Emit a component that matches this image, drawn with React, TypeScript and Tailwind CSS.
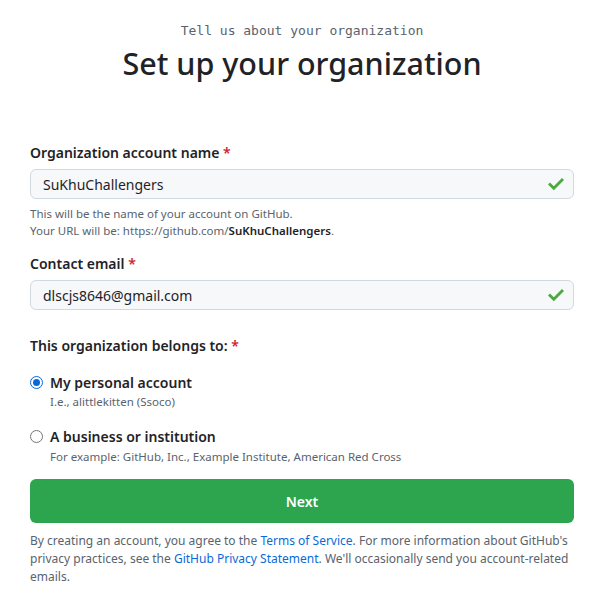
import React from "react";

function Check() {
  return (
    <svg width="18" height="18" viewBox="0 0 18 18" className="absolute right-[9px] top-1/2 -translate-y-1/2" fill="none">
      <path d="M3 9.5l3.8 3.8L15 5" stroke="#4ca93d" strokeWidth="2.8" strokeLinecap="square" strokeLinejoin="miter" />
    </svg>
  );
}

function Field({ value }: { value: string }) {
  return (
    <div className="relative mt-[6px]">
      <div className="h-[30px] w-full rounded-[6px] border border-[#d1d9e0] bg-[#f6f8fa] pl-[12px] flex items-center text-[14px] text-[#1f2328]">
        {value}
      </div>
      <Check />
    </div>
  );
}

export default function App() {
  return (
    <div className="min-h-[604px] w-[612px] bg-white text-[#1f2328]" style={{ fontFamily: '"Noto Sans", sans-serif' }}>
      <div className="pl-[30px] pr-[38px] pt-[22px]">
        <p className="text-center text-[13px] leading-[18px] text-[#59636e]" style={{ fontFamily: '"DejaVu Sans Mono", monospace' }}>
          Tell us about your organization
        </p>
        <h1 className="mt-[3px] text-center text-[30.5px] leading-[40px] font-medium text-[#1f2328]">
          Set up your organization
        </h1>

        <div className="mt-[60px]">
          <label className="block text-[14px] leading-[20px] font-semibold">
            Organization account name <span className="text-[#cf222e]">*</span>
          </label>
          <Field value="SuKhuChallengers" />
          <p className="mt-[6px] text-[11.5px] leading-[17px] text-[#59636e]">
            This will be the name of your account on GitHub.
            <br />
            Your URL will be: https://github.com/<span className="font-semibold text-[#1f2328]">SuKhuChallengers</span>.
          </p>
        </div>

        <div className="mt-[15px]">
          <label className="block text-[14px] leading-[20px] font-semibold">
            Contact email <span className="text-[#cf222e]">*</span>
          </label>
          <Field value="dlscjs8646@gmail.com" />
        </div>

        <div className="mt-[26px]">
          <label className="block text-[14px] leading-[20px] font-semibold">
            This organization belongs to: <span className="text-[#cf222e]">*</span>
          </label>
          <div className="mt-[17px] flex gap-[7px]">
            <div className="mt-[3px] flex h-[13px] w-[13px] items-center justify-center rounded-full border border-[#0969da]">
              <div className="h-[7px] w-[7px] rounded-full bg-[#0969da]" />
            </div>
            <div>
              <div className="text-[14px] leading-[20px] font-semibold">My personal account</div>
              <div className="text-[11.5px] leading-[18px] text-[#59636e]">I.e., alittlekitten (Ssoco)</div>
            </div>
          </div>
          <div className="mt-[16px] flex gap-[7px]">
            <div className="mt-[3px] h-[13px] w-[13px] rounded-full border border-[#767676]" />
            <div>
              <div className="text-[14px] leading-[20px] font-semibold">A business or institution</div>
              <div className="mt-[1px] text-[11.5px] leading-[18px] text-[#59636e]">
                For example: GitHub, Inc., Example Institute, American Red Cross
              </div>
            </div>
          </div>
        </div>

        <button className="mt-[13px] flex h-[44px] w-full items-center justify-center rounded-[6px] bg-[#2da44e] text-[14px] font-semibold text-white">
          Next
        </button>

        <p className="mt-[9px] text-[12px] leading-[18px] text-[#59636e]">
          By creating an account, you agree to the <span className="text-[#0969da]">Terms of Service</span>. For more
          information about GitHub's privacy practices, see the{" "}
          <span className="text-[#0969da]">GitHub Privacy Statement</span>. We'll occasionally send you account-related
          emails.
        </p>
      </div>
    </div>
  );
}
